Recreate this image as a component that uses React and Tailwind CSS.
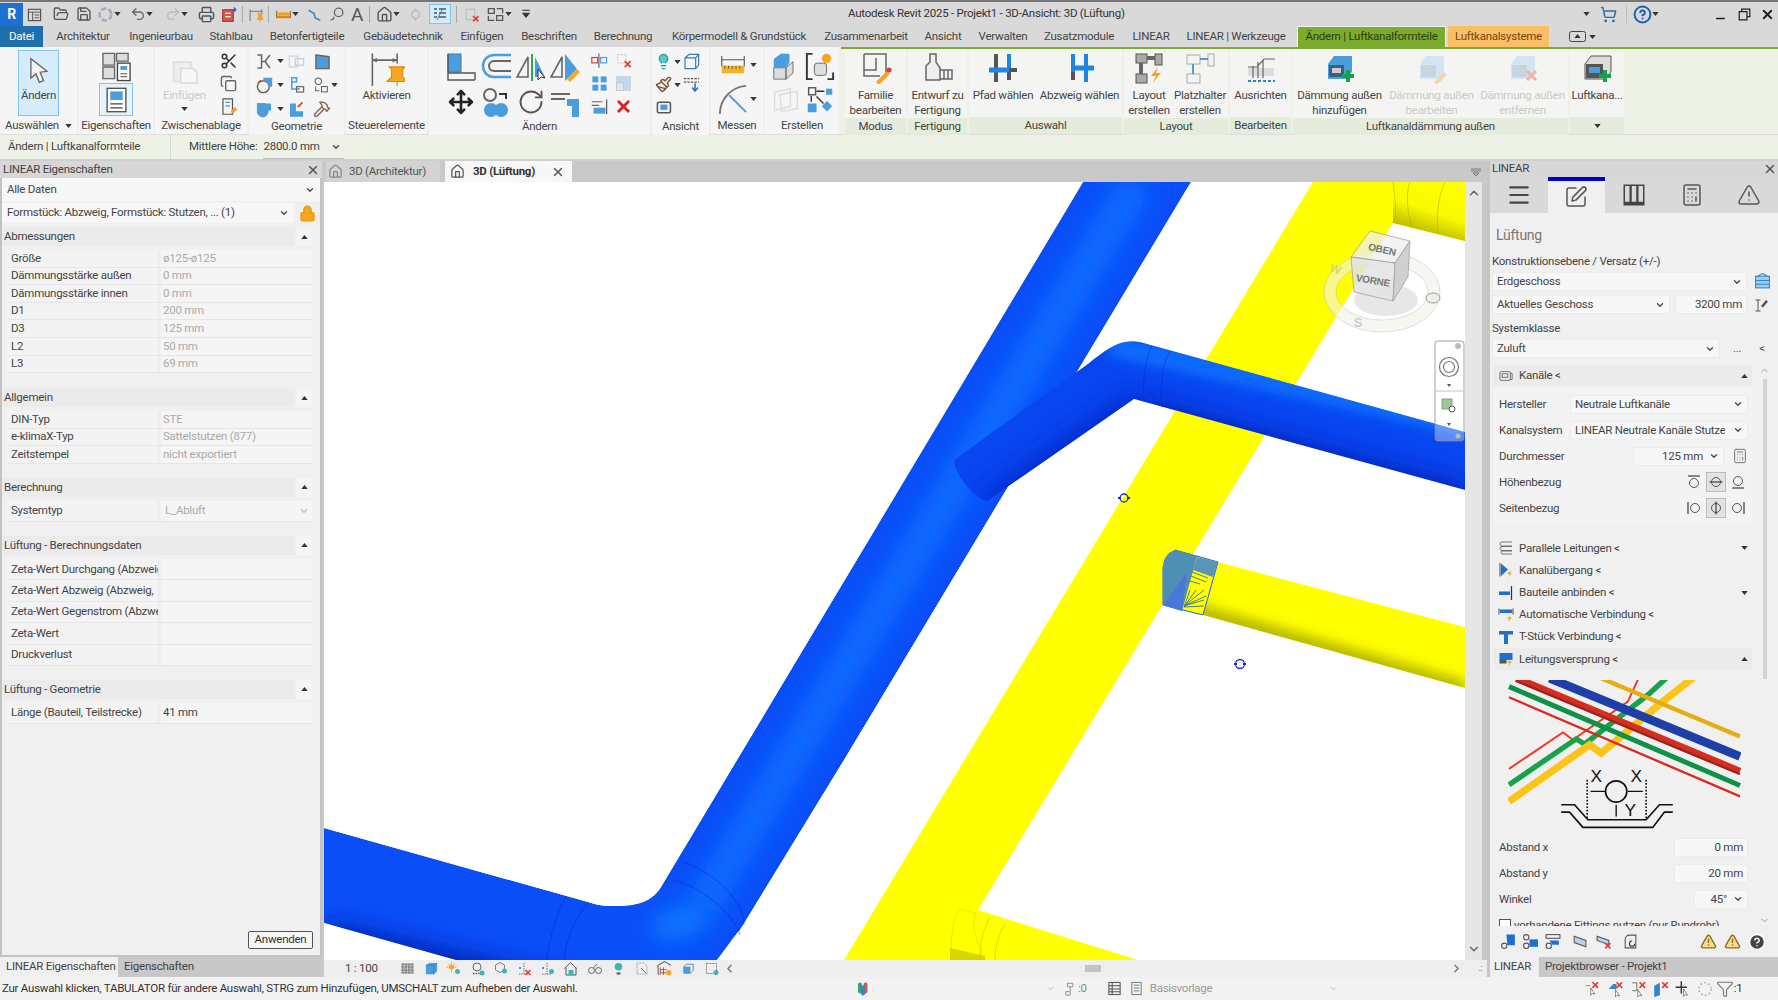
import {
  House, Lock, ShoppingCart, CircleHelp, X, Minus, Scissors, Copy, Move, RotateCw, FolderOpen, Save,
  Printer, Undo2, Redo2, ChevronDown, ChevronUp, ChevronLeft, ChevronRight, Lightbulb, Paintbrush,
  Hammer, Calculator, Menu, SquarePen, TriangleAlert, Filter,
} from 'lucide-react';

const Svg = ({ className = 'w-4 h-4', box = '0 0 32 32', children }) => (
  <svg viewBox={box} className={`${className} shrink-0`} fill="none">{children}</svg>
);

const Caret = ({ up }) => (
  <svg viewBox="0 0 8 5" className="w-[7px] h-[4px] shrink-0">
    <path d={up ? 'M0 5L4 0L8 5Z' : 'M0 0L8 0L4 5Z'} fill="#333" />
  </svg>
);

const Chev = ({ muted }) => <ChevronDown size={10} strokeWidth={3} className={muted ? 'text-[#bbb] shrink-0' : 'text-[#444] shrink-0'} />;

const Plus = () => <path d="M24 18v12M18 24h12" stroke="#16a34a" strokeWidth="4" />;
const Cross = ({ x = 24, y = 24 }) => <path d={`M${x - 5} ${y - 5}l10 10M${x + 5} ${y - 5}l-10 10`} stroke="#e23b2e" strokeWidth="3" />;
const Bolt = () => <path d="M25 15l-7 9h5l-3 7 8-10h-5z" fill="#f5a623" />;
const Pin = () => <path d="M18 14h10l-2 2v6l3 3h-12l3-3v-6zM23 25v6" fill="#f5a623" stroke="#d98a10" strokeWidth="1" />;

function QuickBar() {
  const g = '#555';
  return (
    <div className="flex items-center w-[848px] h-full">
      <div className="w-[23px] h-[23px] bg-[#1d6fd1] text-white font-bold text-[14px] flex items-center justify-center">R</div>
      <div className="flex items-center ml-[4px] gap-0">
        <Svg className="w-[15px] h-[15px]"><rect x="3" y="5" width="26" height="24" stroke={g} strokeWidth="2.5" /><path d="M3 11h26M12 11v18M16 17h10M16 23h10" stroke={g} strokeWidth="2" /></Svg>
        <FolderOpen size={16} color={g} className="ml-[11px]" />
        <Save size={16} color={g} className="ml-[7px]" />
        <Svg className="w-[17px] h-[17px] ml-[5px]"><circle cx="16" cy="16" r="11" stroke="#aab" strokeWidth="5" strokeDasharray="10 4" /></Svg>
        <Caret />
        <Undo2 size={16} color="#666" className="ml-[9px]" />
        <Caret />
        <Redo2 size={16} color="#bbb" className="ml-[12px]" />
        <Caret />
        <Printer size={17} color={g} className="ml-[10px]" />
        <Svg className="w-[17px] h-[17px] ml-[5px]"><rect x="5" y="7" width="20" height="22" fill="#d9574a" stroke="#a33" strokeWidth="2" /><path d="M10 14h10M10 20h10" stroke="#fff" strokeWidth="2.5" /><path d="M20 7h10M26 3l4 4l-4 4" stroke="#1d6fd1" strokeWidth="2.5" /></Svg>
        <div className="w-px h-[17px] bg-[#aaa] ml-[5px]" />
        <Svg className="w-[17px] h-[17px] ml-[5px]"><path d="M4 6v22M4 10h22M26 6v8" stroke="#666" strokeWidth="1.6" /><Pin /></Svg>
        <div className="w-px h-[17px] bg-[#aaa] ml-[3px]" />
        <Svg className="w-[17px] h-[17px] ml-[6px]"><path d="M3 9v14M29 9v14" stroke="#666" strokeWidth="2" /><rect x="3" y="12" width="26" height="5" fill="#e8a820" /><rect x="3" y="18" width="26" height="5" fill="#d98a10" /></Svg>
        <Caret />
        <Svg className="w-[17px] h-[17px] ml-[7px]"><path d="M5 8l10 6l2 8l10 5" stroke="#2d86c9" strokeWidth="3" /></Svg>
        <Svg className="w-[17px] h-[17px] ml-[5px]"><circle cx="20" cy="12" r="8" stroke="#666" strokeWidth="2.5" /><path d="M5 26a6 6 0 0 0 6-6" stroke="#666" strokeWidth="2.5" /></Svg>
        <span className="ml-[6px] text-[19px] leading-none text-[#555]">A</span>
        <div className="w-px h-[17px] bg-[#aaa] ml-[6px]" />
        <House size={17} color={g} className="ml-[6px]" />
        <Caret />
        <Svg className="w-[15px] h-[15px] ml-[8px]"><circle cx="16" cy="16" r="8" stroke="#bbb" strokeWidth="3" /><path d="M16 2v6M16 24v6" stroke="#bbb" strokeWidth="3" /></Svg>
        <div className="ml-[6px] w-[22px] h-[20px] bg-[#d3eaf7] border border-[#7fc6ee] flex items-center justify-center">
          <Svg className="w-[16px] h-[16px]"><path d="M4 6h6M4 14h6M4 22h6M14 6h14M14 14h14M14 22h14" stroke="#555" strokeWidth="3" /><path d="M10 28L22 4" stroke="#2d86c9" strokeWidth="2" /></Svg>
        </div>
        <div className="w-px h-[17px] bg-[#aaa] ml-[5px]" />
        <Svg className="w-[17px] h-[17px] ml-[6px]"><rect x="6" y="6" width="16" height="20" stroke="#bbb" strokeWidth="2" /><Cross /></Svg>
        <Svg className="w-[19px] h-[19px] ml-[6px]"><path d="M4 6h10v8H4zM18 18h10v8H18zM18 6h10M28 6v8M4 18v8h10" stroke="#555" strokeWidth="2.2" /></Svg>
        <Caret />
        <Svg className="w-[12px] h-[12px] ml-[8px]"><path d="M6 6h20M8 14h16l-8 10z" stroke="#333" fill="#333" strokeWidth="3" /></Svg>
      </div>
    </div>
  );
}

function TitleBar() {
  return (
    <div className="h-[26px] bg-[#d9d9d9] border-t-2 border-[#777] flex items-center">
      <QuickBar />
      <span className="text-[11.5px] text-[#333] whitespace-nowrap w-[285px]">Autodesk Revit 2025 - Projekt1 - 3D-Ansicht: 3D (Lüftung)</span>
      <div className="flex items-center ml-[450px]">
        <Caret />
        <ShoppingCart size={17} color="#2f6f9f" className="ml-[10px]" />
        <div className="w-px h-[17px] bg-[#bbb] ml-[9px]" />
        <CircleHelp size={19} color="#1f5fa8" strokeWidth={2.5} className="ml-[6px]" />
        <Caret />
        <Minus size={13} strokeWidth={3} color="#222" className="ml-[55px] mt-[8px]" />
        <Svg className="w-[13px] h-[13px] ml-[11px]"><path d="M9 9V3h20v18h-7M3 9h19v20H3z" stroke="#222" strokeWidth="3" /></Svg>
        <X size={15} strokeWidth={3} color="#222" className="ml-[9px]" />
      </div>
    </div>
  );
}

const tabs = [
  ['Architektur', 'w-[76px]'], ['Ingenieurbau', 'w-[80px]'], ['Stahlbau', 'w-[60px]'], ['Betonfertigteile', 'w-[92px]'],
  ['Gebäudetechnik', 'w-[100px]'], ['Einfügen', 'w-[58px]'], ['Beschriften', 'w-[76px]'], ['Berechnung', 'w-[72px]'],
  ['Körpermodell & Grundstück', 'w-[160px]'], ['Zusammenarbeit', 'w-[94px]'], ['Ansicht', 'w-[60px]'], ['Verwalten', 'w-[60px]'],
  ['Zusatzmodule', 'w-[92px]'], ['LINEAR', 'w-[52px]'], ['LINEAR | Werkzeuge', 'w-[118px]'],
];

function TabBar() {
  return (
    <div className="h-[21px] bg-[#d9d9d9] flex items-stretch text-[11.5px] text-[#444] whitespace-nowrap">
      <div className="w-[43px] bg-[#1f6fae] text-white flex items-center justify-center mr-[2px]">Datei</div>
      {tabs.map(([t, w]) => <div key={t} className={`${w} flex items-center justify-center`}>{t}</div>)}
      <div className="w-[149px] ml-[2px] bg-[#7cab2f] text-[#2c3d10] flex items-center justify-center border border-[#f0f0f0] border-b-0">Ändern | Luftkanalformteile</div>
      <div className="w-[101px] ml-[2px] bg-[#fbbe66] text-[#6b4a12] flex items-center justify-center">Luftkanalsysteme</div>
      <div className="ml-[20px] flex items-center gap-[3px]">
        <Svg className="w-[17px] h-[11px]" box="0 0 34 22"><rect x="1" y="1" width="32" height="20" rx="4" stroke="#444" strokeWidth="2" /><path d="M17 6l6 8H11z" fill="#333" /></Svg>
        <Caret />
      </div>
    </div>
  );
}

const Group = ({ w, label, ctx, children }) => (
  <div className={`${w} flex flex-col shrink-0 ${ctx ? 'bg-[#f4f5f2]' : 'bg-[#f5f5f5]'}`}>
    <div className={`${ctx ? 'h-[69px]' : 'h-[71px]'} flex justify-center`}>{children}</div>
    <div className={`h-[17px] flex items-center justify-center text-[11.5px] text-[#444] whitespace-nowrap ${ctx ? 'bg-[#e6ecdc]' : 'bg-[#f5f5f5]'}`}>{label}</div>
  </div>
);

const Big = ({ icon, text, w = 'w-[60px]', off }) => (
  <div className={`${w} flex flex-col items-center pt-[2px] shrink-0`}>
    <div className="h-[34px] flex items-center justify-center">{icon}</div>
    <div className={`mt-[3px] text-[11.5px] leading-[15px] text-center whitespace-pre ${off ? 'text-[#c9c9c9]' : 'text-[#444]'}`}>{text}</div>
  </div>
);

const I = ({ children, c = 'w-[20px] h-[20px]' }) => <Svg className={c}>{children}</Svg>;

function Ribbon() {
  const big = 'w-[32px] h-[32px]';
  const small = 'w-[19px] h-[19px]';
  return (
    <div className="h-[88px] flex gap-[2px] bg-[#eef2e6] border-b border-[#ddd]">
      <Group w="w-[77px]" label={<span className="flex items-center gap-[6px]">Auswählen <Caret /></span>}>
        <div className="w-[41px] h-[66px] mt-[3px] bg-[#d6ecfa] border border-[#7fc6ee] flex flex-col items-center pt-[3px]">
          <Svg className="w-[27px] h-[33px]"><path d="M7 2v23l6-5 4 10 5-2-4-10 8-1z" fill="#f5f5f5" stroke="#666" strokeWidth="1.6" /></Svg>
          <span className="text-[11.5px] leading-[15px] text-[#444] mt-[1px]">Ändern</span>
        </div>
      </Group>
      <Group w="w-[74px]" label="Eigenschaften">
        <div className="flex flex-col items-center pt-[4px]">
          <Svg className="w-[31px] h-[32px]"><path d="M2 2h12v12H2zM16 2h12v8H16zM2 16h12v12H2z" fill="#ddd" stroke="#666" strokeWidth="1.4" /><rect x="17" y="12" width="13" height="18" fill="#fff" stroke="#444" strokeWidth="1.4" /><rect x="20" y="15" width="7" height="4" fill="#4a9ede" /><path d="M20 23h7M20 26h7" stroke="#444" /></Svg>
          <div className="w-[34px] h-[33px] bg-[#e3f2fb] border border-[#7fc6ee] flex items-center justify-center">
            <Svg className="w-[25px] h-[30px]"><rect x="4" y="1" width="24" height="30" fill="#fff" stroke="#444" strokeWidth="1.6" /><rect x="8" y="5" width="16" height="11" fill="#4a9ede" /><path d="M8 21h16M8 26h16" stroke="#444" strokeWidth="1.5" /></Svg>
          </div>
        </div>
      </Group>
      <Group w="w-[92px]" label="Zwischenablage">
        <div className="flex gap-[14px] pt-[5px]">
          <div className="flex flex-col items-center">
            <Svg className="w-[28px] h-[36px]"><path d="M3 7h20v22H3z" fill="#eee" stroke="#ddd" strokeWidth="2" /><path d="M11 14h14l5 5v12H11z" fill="#f7f7f7" stroke="#ddd" strokeWidth="2" /></Svg>
            <span className="text-[11.5px] text-[#c9c9c9] leading-[15px]">Einfügen</span>
            <span className="mt-[4px]"><Caret /></span>
          </div>
          <div className="flex flex-col gap-[5px] pt-0">
            <Scissors size={18} color="#333" />
            <Copy size={17} color="#666" />
            <I c={small}><path d="M5 3h16v26H5z" stroke="#555" strokeWidth="2" /><path d="M9 9h8M9 15h8" stroke="#4a9ede" strokeWidth="2" /><path d="M18 24l7-7 4 4-7 7z" fill="#f5a623" /></I>
          </div>
        </div>
      </Group>
      <Group w="w-[95px]" label="Geometrie">
        <div className="grid grid-cols-[32px_26px_26px] auto-rows-[24px] pt-[2px] items-center">
          <span className="flex items-center gap-[3px]"><I c={small}><path d="M4 5h7v22H4M25 5l-8 11l8 11M11 16h6" stroke="#666" strokeWidth="2.5" /></I><Caret /></span>
          <I c={small}><path d="M4 7h14v18H4z" stroke="#bfd7ea" strokeWidth="2" /><path d="M14 11h14v11H14z" stroke="#ccc" strokeWidth="2" /></I>
          <I c={small}><path d="M5 5l22 3v20H5z" fill="#4a9ede" stroke="#666" strokeWidth="2.5" /></I>
          <span className="flex items-center gap-[3px]"><I c={small}><circle cx="14" cy="18" r="10" stroke="#666" strokeWidth="2.5" /><path d="M14 8a10 10 0 0 1 10 10h5V3H14z" fill="#4a9ede" /><path d="M5 12l5-5" stroke="#e23b2e" strokeWidth="2.5" /></I><Caret /></span>
          <I c={small}><path d="M8 3h8v7H8zM8 10v12h14" stroke="#4a9ede" strokeWidth="2.5" /><rect x="16" y="18" width="12" height="9" stroke="#666" strokeWidth="2" /></I>
          <span className="flex items-center gap-[1px]"><I c="w-[17px] h-[17px]"><circle cx="10" cy="8" r="6" stroke="#666" strokeWidth="2" /><rect x="16" y="18" width="11" height="10" stroke="#666" strokeWidth="2" /><path d="M5 18v8h7" stroke="#666" strokeWidth="2" /></I><Caret /></span>
          <span className="flex items-center gap-[3px]"><I c={small}><path d="M4 6h14v6a9 9 0 1 1-14 8z" fill="#4a9ede" stroke="#3b7db3" strokeWidth="1" /><path d="M18 6h9v12h-9" fill="#4a9ede" /></I><Caret /></span>
          <I c={small}><path d="M5 6v22h22v-9H15V6z" fill="#4a9ede" /><path d="M18 12l8-8" stroke="#e23b2e" strokeWidth="3" /></I>
          <Hammer size={18} color="#8a6a5a" />
        </div>
      </Group>
      <Group w="w-[81px]" label="Steuerelemente">
        <Big w="w-[80px] mt-[2px]" text="Aktivieren" icon={<Svg className="w-[36px] h-[36px]"><path d="M3 3v30M3 9h22M25 3v9" stroke="#666" strokeWidth="1.4" /><path d="M3 9l4-2v4zM25 9l-4-2v4z" fill="#666" /><path d="M18 15h14l-2 2v7l4 4H16l4-4v-7zM25 28v4" fill="#f5a623" stroke="#d98a10" /></Svg>} />
      </Group>
      <Group w="w-[221px]" label="Ändern">
        <div className="flex pt-[2px] gap-[4px]">
          <div className="grid grid-cols-[33px_37px_33px_36px] auto-rows-[35px] items-center justify-items-center">
            <I c={big}><rect x="3" y="3" width="13" height="18" fill="#4a9ede" stroke="#3b7db3" /><path d="M3 3v26h27M3 22h27v7" stroke="#555" strokeWidth="1.4" /></I>
            <I c={big}><path d="M31 4H14a10 10 0 0 0 0 22h17" stroke="#4a9ede" strokeWidth="2.5" /><path d="M31 10H14a4.500 4.500 0 0 0 0 10h17" stroke="#666" strokeWidth="2" /></I>
            <I c={big}><path d="M13 6L2 26h11z" stroke="#666" strokeWidth="1.6" /><path d="M17 3v27" stroke="#2fa84f" strokeWidth="2" /><path d="M20 6l10 20H20z" fill="#4a9ede" /><path d="M23 18v11l3-3 4 1z" fill="#fff" stroke="#333" /></I>
            <I c={big}><path d="M13 6L2 26h11z" stroke="#666" strokeWidth="1.6" /><path d="M16 3v27l12-12z" fill="#4a9ede" /><path d="M18 28l10-10 3 3-10 10z" fill="#f5a623" /></I>
            <Move size={26} color="#222" strokeWidth={2.4} />
            <I c={big}><circle cx="10" cy="9" r="6" stroke="#666" strokeWidth="2" /><circle cx="11" cy="24" r="7" fill="#4a9ede" /><circle cx="21" cy="24" r="7" fill="#4a9ede" /><path d="M19 8h7v5" stroke="#333" strokeWidth="2" /></I>
            <RotateCw size={28} color="#555" strokeWidth={1.6} />
            <I c={big}><path d="M2 8h19M2 13h14" stroke="#666" strokeWidth="2" /><path d="M18 13h12v18h-7V20h-5z" fill="#4a9ede" /></I>
          </div>
          <div className="grid grid-cols-[24px_24px] auto-rows-[23px] items-center justify-items-center">
            <I c={small}><path d="M15 4v24" stroke="#666" strokeWidth="2" /><rect x="3" y="11" width="10" height="9" stroke="#e23b2e" strokeWidth="2" /><rect x="18" y="11" width="10" height="9" stroke="#4a9ede" strokeWidth="2" /></I>
            <I c={small}><path d="M6 6h14v14H6z" stroke="#ccc" strokeWidth="2" strokeDasharray="3 2" /><Cross x={23} y={22} /></I>
            <I c={small}><rect x="4" y="4" width="10" height="10" fill="#4a9ede" /><rect x="18" y="4" width="10" height="10" fill="#4a9ede" /><rect x="4" y="18" width="10" height="10" fill="#4a9ede" /><rect x="18" y="18" width="10" height="10" fill="#4a9ede" /></I>
            <I c={small}><rect x="4" y="4" width="24" height="24" fill="#bcdaf0" stroke="#ccc" /><rect x="4" y="15" width="12" height="13" fill="#e6e6e6" stroke="#bbb" /></I>
            <I c={small}><path d="M3 8h18M3 14h12" stroke="#666" strokeWidth="2" /><rect x="6" y="18" width="20" height="10" fill="#4a9ede" /><path d="M28 4v25" stroke="#555" strokeWidth="2" /></I>
            <X size={19} color="#e02020" strokeWidth={3.5} />
          </div>
        </div>
      </Group>
      <Group w="w-[57px]" label="Ansicht">
        <div className="grid grid-cols-[27px_24px] auto-rows-[23px] pt-[3px] items-center">
          <span className="flex items-center gap-[2px]"><Lightbulb size={17} color="#2ea6a6" fill="#5cc8c8" /><Caret /></span>
          <I c={small}><path d="M5 10h18v18H5zM5 10l7-6h16v18l-5 6M23 10l5-6" stroke="#3b7db3" strokeWidth="2" /></I>
          <span className="flex items-center gap-[2px]"><Paintbrush size={17} color="#7a5230" /><Caret /></span>
          <I c={small}><path d="M3 6h26M3 12h26" stroke="#555" strokeWidth="2" strokeDasharray="4 2" /><path d="M22 14v12M17 21l5 6 5-6" stroke="#1d6fd1" strokeWidth="2.5" /></I>
          <I c={small}><rect x="4" y="7" width="22" height="18" rx="3" stroke="#555" strokeWidth="2.5" /><rect x="9" y="11" width="12" height="9" fill="#4a9ede" /></I>
        </div>
      </Group>
      <Group w="w-[52px]" label="Messen">
        <div className="flex flex-col pt-[6px] gap-[6px] items-center">
          <span className="flex items-center gap-[2px]"><I c="w-[30px] h-[24px]"><path d="M1 4v14M31 4v14M1 9h30" stroke="#555" strokeWidth="1.5" /><rect x="1" y="17" width="30" height="10" fill="#f0b429" /><path d="M5 17v4M10 17v4M15 17v4M20 17v4M25 17v4" stroke="#444" /></I><Caret /></span>
          <span className="flex items-center gap-[2px]"><I c="w-[30px] h-[32px]"><path d="M2 32A30 30 0 0 1 30 2" stroke="#777" strokeWidth="2" /><path d="M12 12L30 30" stroke="#4a9ede" strokeWidth="2" /></I><Caret /></span>
        </div>
      </Group>
      <Group w="w-[74px]" label="Erstellen">
        <div className="grid grid-cols-[36px_32px] auto-rows-[34px] pt-[2px] items-center justify-items-center">
          <I c="w-[28px] h-[30px]"><path d="M2 18h14v13H2zM16 18l8-7v13l-8 7z" fill="#ddd" stroke="#666" /><path d="M2 8l8-6h10v10l-4 6H2z" fill="#4a9ede" /></I>
          <I c="w-[30px] h-[30px]"><path d="M8 3H2v27h6M24 30h6v-7" stroke="#333" strokeWidth="2" /><rect x="10" y="13" width="13" height="13" rx="3" fill="#ddd" stroke="#666" /><circle cx="23" cy="8" r="5" fill="#f5a623" /></I>
          <I c="w-[30px] h-[28px]"><path d="M3 7l18-4v20L3 28zM9 10l20-4v20l-18 3z" fill="#f2f4f6" stroke="#ddd" strokeWidth="1.6" /></I>
          <I c="w-[28px] h-[28px]"><rect x="3" y="2" width="8" height="8" stroke="#555" strokeWidth="1.6" /><path d="M12 6h9M6 11v7M12 12l8 8" stroke="#333" strokeWidth="1.6" /><rect x="23" y="3" width="7" height="7" fill="#4a9ede" /><rect x="2" y="20" width="10" height="10" fill="#4a9ede" /><path d="M24 17l6 6-6 6-6-6z" fill="#4a9ede" /></I>
        </div>
      </Group>
      <div className="flex-1 flex gap-[2px] border-t-2 border-[#7cab2f] ml-0 pl-[4px]">
        <Group ctx w="w-[61px]" label="Modus">
          <Big text={'Familie\nbearbeiten'} icon={<I c={big}><path d="M4 2h22v22M4 2v22h16" stroke="#666" strokeWidth="1.5" /><path d="M4 18h12V6" stroke="#666" strokeWidth="1.5" /><path d="M16 30l11-11 3 3-11 11z" fill="#f5a623" /><circle cx="29" cy="18" r="2.500" fill="#e23b2e" /></I>} />
        </Group>
        <Group ctx w="w-[59px]" label="Fertigung">
          <Big text={'Entwurf zu\nFertigung'} icon={<I c={big}><path d="M8 2h6v8l4 6v12H4V14l4-4z" stroke="#666" strokeWidth="1.5" fill="#eee" /><path d="M18 18h12v9H18M22 18v9M26 18v9" stroke="#666" strokeWidth="1.5" /></I>} />
        </Group>
        <Group ctx w="w-[153px]" label="Auswahl">
          <div className="flex">
            <Big w="w-[68px]" text="Pfad wählen" icon={<I c={big}><path d="M9 2v28" stroke="#555" strokeWidth="4" /><path d="M22 2v15" stroke="#1d86e0" strokeWidth="4" /><path d="M22 17v11" stroke="#555" strokeWidth="4" /><path d="M2 18h20" stroke="#1d86e0" strokeWidth="5" /><path d="M22 18h8" stroke="#555" strokeWidth="4" /></I>} />
            <Big w="w-[85px]" text="Abzweig wählen" icon={<I c={big}><path d="M9 2v18" stroke="#1d86e0" strokeWidth="4" /><path d="M9 20v8" stroke="#555" strokeWidth="4" /><path d="M22 2v28" stroke="#1d86e0" strokeWidth="4" /><path d="M7 16h23" stroke="#1d86e0" strokeWidth="5" /></I>} />
          </div>
        </Group>
        <Group ctx w="w-[104px]" label="Layout">
          <div className="flex">
            <Big w="w-[48px]" text={'Layout\nerstellen'} icon={<I c={big}><rect x="3" y="2" width="11" height="9" fill="#aaa" stroke="#555" /><rect x="22" y="2" width="7" height="11" fill="#aaa" stroke="#555" /><rect x="3" y="22" width="11" height="9" fill="#aaa" stroke="#555" /><path d="M14 6h8M8 11v11" stroke="#666" strokeWidth="4" /><Bolt /></I>} />
            <Big w="w-[54px]" text={'Platzhalter\nerstellen'} icon={<I c={big}><rect x="3" y="3" width="13" height="9" stroke="#aaa" /><rect x="24" y="2" width="6" height="12" stroke="#aaa" /><rect x="3" y="22" width="13" height="9" stroke="#aaa" /><path d="M16 7h8M9 12v10" stroke="#4a9ede" strokeWidth="2" /></I>} />
          </div>
        </Group>
        <Group ctx w="w-[61px]" label="Bearbeiten">
          <Big text="Ausrichten" icon={<I c={big}><rect x="3" y="16" width="26" height="8" fill="#ddd" /><path d="M3 15h9l7-8h11M8 26v-12M13 26V10M18 26V8" stroke="#666" strokeWidth="1.2" /><path d="M3 29h27" stroke="#2d86c9" strokeWidth="2" strokeDasharray="3 2" /></I>} />
        </Group>
        <Group ctx w="w-[275px]" label="Luftkanaldämmung außen">
          <div className="flex">
            <Big w="w-[92px]" text={'Dämmung außen\nhinzufügen'} icon={<I c={big}><path d="M4 12l6-8h18v16l-6 7H4z" fill="#4a9ede" /><rect x="5" y="13" width="15" height="12" fill="#3b5f7c" /><rect x="8" y="16" width="9" height="5" fill="#ccc" /><Plus /></I>} />
            <Big off w="w-[92px]" text={'Dämmung außen\nbearbeiten'} icon={<I c={big}><path d="M4 12l6-8h18v16l-6 7H4z" fill="#d3e5f2" /><rect x="5" y="13" width="15" height="12" fill="#c9d5de" /><path d="M18 30l10-10 3 3-10 10z" fill="#f3d6a3" /></I>} />
            <Big off w="w-[90px]" text={'Dämmung außen\nentfernen'} icon={<I c={big}><path d="M4 12l6-8h18v16l-6 7H4z" fill="#d3e5f2" /><rect x="5" y="13" width="15" height="12" fill="#c9d5de" /><path d="M20 19l9 9M29 19l-9 9" stroke="#f1b0a8" strokeWidth="3" /></I>} />
          </div>
        </Group>
        <Group ctx w="w-[54px]" label={<Caret />}>
          <Big w="w-[54px]" text="Luftkana..." icon={<I c={big}><path d="M4 12l6-8h20v16l-6 7H4z" fill="#ddd" stroke="#555" /><rect x="5" y="12" width="17" height="14" fill="#555" /><rect x="8" y="15" width="11" height="6" fill="#4a9ede" /><Plus /></I>} />
        </Group>
      </div>
    </div>
  );
}

function OptionsBar() {
  return (
    <div className="h-[26px] bg-[#eef2e6] border-b-2 border-[#cfcfcf] flex items-center text-[11.5px] text-[#444] whitespace-nowrap">
      <span className="ml-[8px] w-[162px]">Ändern | Luftkanalformteile</span>
      <div className="w-px h-full bg-[#d5d8ce]" />
      <span className="ml-[18px]">Mittlere Höhe:</span>
      <span className="ml-[6px] h-full flex items-center border-b border-[#bbb] w-[81px] justify-between pr-[3px]">2800.0 mm <Chev /></span>
    </div>
  );
}

const Row = ({ label, value, h = 'h-[17.6px]', on }) => (
  <div className={`${h} flex items-center border-b border-[#e6e6e6] text-[11.5px] whitespace-nowrap`}>
    <div className="w-[151px] pl-[3px] overflow-hidden text-[#444] border-r border-[#e6e6e6] h-full flex items-center bg-[#f3f3f3]">{label}</div>
    <div className={`flex-1 ml-[2px] h-full pl-[2px] flex items-center bg-[#f5f5f5] ${on ? 'text-[#444]' : 'text-[#aaa]'}`}>{value}</div>
  </div>
);

const Section = ({ title, mt, children }) => (
  <div className={mt}>
    <div className="h-[19px] flex items-stretch text-[11.5px] text-[#444] pr-[8px]">
      <div className="flex-1 bg-[#ebebeb] flex items-center pl-[2px]">{title}</div>
      <div className="w-[16px] bg-[#f4f4f4] flex items-center justify-center ml-px"><Caret up /></div>
    </div>
    <div className="pl-[6px] pr-[8px] pt-[4px]">{children}</div>
  </div>
);

function LeftPanel() {
  return (
    <div className="w-[324px] shrink-0 flex flex-col pr-[2px]">
      <div className="h-[17px] bg-[#d7d7d7] flex items-center justify-between text-[11.5px] text-[#444] pl-[3px] pr-[2px]">LINEAR Eigenschaften <X size={14} color="#555" strokeWidth={2.5} /></div>
      <div className="flex-1 bg-[#f0f0f0] border-2 border-[#c2c2c2] border-t-0 flex flex-col min-h-0">
        <div className="h-[23px] bg-[#f7f7f7] flex items-center justify-between px-[5px] text-[11.5px] text-[#444]">Alle Daten <Chev /></div>
        <div className="flex items-center mt-[2px] pr-[4px]">
          <div className="h-[20px] flex-1 bg-[#f7f7f7] flex items-center justify-between px-[5px] text-[11.5px] text-[#444] whitespace-nowrap">Formstück: Abzweig, Formstück: Stutzen, ... (1) <Chev /></div>
          <Lock size={17} className="text-[#f39c12] ml-[5px]" fill="#f5a623" strokeWidth={2.5} />
        </div>
        <Section title="Abmessungen" mt="mt-[4px]">
          <Row label="Größe" value="ø125-ø125" />
          <Row label="Dämmungsstärke außen" value="0 mm" />
          <Row label="Dämmungsstärke innen" value="0 mm" />
          <Row label="D1" value="200 mm" />
          <Row label="D3" value="125 mm" />
          <Row label="L2" value="50 mm" />
          <Row label="L3" value="69 mm" />
        </Section>
        <Section title="Allgemein" mt="mt-[15px]">
          <Row label="DIN-Typ" value="STE" />
          <Row label="e-klimaX-Typ" value="Sattelstutzen (877)" />
          <Row label="Zeitstempel" value="nicht exportiert" />
        </Section>
        <Section title="Berechnung" mt="mt-[14px]">
          <Row h="h-[21px]" label="Systemtyp" value={<span className="flex items-center justify-between w-full pr-[3px] pl-[2px]">L_Abluft <Chev muted /></span>} />
        </Section>
        <Section title="Lüftung - Berechnungsdaten" mt="mt-[14px]">
          <Row h="h-[21.4px]" label="Zeta-Wert Durchgang (Abzweig" value="" />
          <Row h="h-[21.4px]" label="Zeta-Wert Abzweig (Abzweig," value="" />
          <Row h="h-[21.4px]" label="Zeta-Wert Gegenstrom (Abzweig" value="" />
          <Row h="h-[21.4px]" label="Zeta-Wert" value="" />
          <Row h="h-[21.4px]" label="Druckverlust" value="" />
        </Section>
        <Section title="Lüftung - Geometrie" mt="mt-[14px]">
          <Row h="h-[21px]" on label="Länge (Bauteil, Teilstrecke)" value="41 mm" />
        </Section>
        <div className="mt-auto mb-[6px] flex justify-end pr-[7px]">
          <div className="w-[65px] h-[18px] border border-[#555] rounded-[2px] bg-[#f5f5f5] flex items-center justify-center text-[11.5px] text-[#333]">Anwenden</div>
        </div>
      </div>
      <div className="h-[20px] flex text-[11.5px] text-[#444] whitespace-nowrap">
        <div className="w-[118px] bg-[#f0f0f0] flex items-center pl-[6px]">LINEAR Eigenschaften</div>
        <div className="flex-1 bg-[#c8c8c8] flex items-center pl-[6px]">Eigenschaften</div>
      </div>
    </div>
  );
}

function Viewport() {
  const main = 'M1083 182L737 760L661 887C650 905 630 906 613 906C600 906 595 904 588 902L324 828L324 923L456 960L717 960C725 950 735 935 740 930L844 760L1191 182Z';
  const arm = 'M1465 432L1140 342C1120 338 1105 350 1089 363L955 459C950 470 975 500 987 501L1134 399L1465 490Z';
  return (
    <svg viewBox="324 182 1141 778" className="w-[1141px] h-[778px] bg-white block shrink-0">
      <defs>
        <clipPath id="mainClip"><path d={main} /></clipPath>
        <clipPath id="armClip"><path d={arm} /></clipPath>
        <clipPath id="yBranchClip"><path d="M1218 562L1465 627L1465 688L1203 615Z" /></clipPath>
        <filter id="soft" filterUnits="userSpaceOnUse" x="324" y="182" width="1141" height="778"><feGaussianBlur stdDeviation="12" /></filter>
        <filter id="softer" filterUnits="userSpaceOnUse" x="324" y="182" width="1141" height="778"><feGaussianBlur stdDeviation="6" /></filter>
        <linearGradient id="ytop" gradientUnits="userSpaceOnUse" x1="1440" y1="190" x2="1425" y2="235">
          <stop offset="0" stopColor="#ffff00" />
          <stop offset="0.5" stopColor="#f8f800" />
          <stop offset="1" stopColor="#b8b800" />
        </linearGradient>
      </defs>

      {/* yellow run */}
      <path d="M1313 182L1465 182L1465 241L1393 223L978 910L1138 960L844 960Z" fill="#ffff00" />
      <path d="M1393 223L1393 182L1465 182L1465 241Z" fill="url(#ytop)" />
      <path d="M1393 182C1395 200 1398 215 1393 223M1410 182C1405 195 1408 215 1412 228M1445 182C1438 195 1436 220 1438 234" stroke="#a8a800" strokeWidth="0.5" fill="none" />
      <path d="M959 909C950 925 952 945 950 960L985 960C978 945 970 925 976 913Z" fill="#ffff00" stroke="#d0d000" strokeWidth="0.5" />
      <path d="M950 948L985 956L985 960L950 960Z" fill="#c8c800" opacity="0.7" />
      <path d="M990 918C982 930 980 945 980 960M1005 924C998 935 995 948 995 960" stroke="#b8b800" strokeWidth="0.5" fill="none" />

      {/* yellow branch and fitting */}
      <g clipPath="url(#yBranchClip)">
        <path d="M1218 562L1465 627L1465 688L1203 615Z" fill="#ffff00" />
        <path d="M1195 612L1465 690" stroke="#b8b800" strokeWidth="18" filter="url(#softer)" />
      </g>
      <path d="M1175 550L1218 562L1203 615L1163 605L1163 567Z" fill="#ffff00" stroke="#1f5fe0" strokeWidth="1" />
      <path d="M1175 550L1197 556L1182 611L1163 605L1163 567C1163 558 1168 552 1175 550Z" fill="#4f8fb5" />
      <path d="M1163 605L1187 572L1182 611Z" fill="#4a78d8" />
      <path d="M1197 557L1218 562L1213 577L1193 570Z" fill="#5a94b8" />
      <path d="M1192 572L1208 578M1191 576L1206 582M1190 581L1200 584M1184 606L1204 590M1184 606L1206 596M1184 606L1204 600M1184 607L1204 606M1184 607L1196 590M1184 607L1190 590" stroke="#3a6f98" strokeWidth="0.9" fill="none" />

      {/* blue runs */}
      <g clipPath="url(#mainClip)">
        <path d={main} fill="#0a4ef8" />
        <path d="M1137 182L790 760L700 910" stroke="#0a6cff" strokeWidth="34" filter="url(#soft)" />
        <path d="M324 945L560 1000" stroke="#001ea8" strokeWidth="44" filter="url(#soft)" />
        <path d="M655 930L705 915" stroke="#0a7cff" strokeWidth="28" filter="url(#soft)" />
      </g>
      <path d="M566 896C556 915 549 940 547 960M588 902C574 920 566 940 564 960" stroke="#0a2cb0" strokeWidth="0.5" fill="none" />
      <path d="M683 862C710 870 745 900 744 925M672 880C700 885 735 915 740 935" stroke="#0a2cb0" strokeWidth="0.5" fill="none" />

      <g clipPath="url(#armClip)">
        <path d={arm} fill="#0846f0" />
        <path d="M1110 345L1465 425" stroke="#0a6cff" strokeWidth="22" filter="url(#softer)" />
        <path d="M1140 418L1465 505" stroke="#001ab0" strokeWidth="34" filter="url(#soft)" />
        <path d="M990 510L1140 405" stroke="#0028c8" strokeWidth="30" filter="url(#soft)" />
      </g>
      <path d="M1152 346C1145 360 1142 385 1144 402M1170 351C1162 365 1160 385 1162 407" stroke="#0a2cb0" strokeWidth="0.5" fill="none" />

      {/* grip markers */}
      <g stroke="#1530d0" strokeWidth="1.300" fill="none">
        <circle cx="1124" cy="498" r="4" />
        <circle cx="1240" cy="664" r="4.500" />
        <path d="M1118 498h3M1127 498h3M1234 664h3M1243 664h3" strokeWidth="2" />
      </g>

      {/* view cube */}
      <ellipse cx="1382" cy="292" rx="52" ry="34" fill="none" stroke="#f2f2ea" strokeWidth="12" opacity="0.6" />
      <ellipse cx="1382" cy="292" rx="58" ry="40" fill="none" stroke="#999" strokeWidth="0.6" opacity="0.5" />
      <ellipse cx="1382" cy="292" rx="46" ry="28" fill="none" stroke="#999" strokeWidth="0.6" opacity="0.5" />
      <ellipse cx="1386" cy="300" rx="32" ry="16" fill="#bbb" opacity="0.35" />
      <path d="M1370 231L1410 241L1395 263L1351 257Z" fill="#efefef" fillOpacity="0.75" stroke="#999" strokeWidth="0.7" />
      <path d="M1351 257L1395 263L1393 301L1354 292Z" fill="#e3e3e3" fillOpacity="0.85" stroke="#999" strokeWidth="0.7" />
      <path d="M1410 241L1395 263L1393 301L1408 277Z" fill="#d0d0d0" stroke="#999" strokeWidth="0.7" />
      <text x="1382" y="253" textAnchor="middle" fontSize="10" fontWeight="700" fill="#777" transform="rotate(12 1382 250)" fontFamily="Liberation Sans, sans-serif">OBEN</text>
      <text x="1373" y="284" textAnchor="middle" fontSize="10" fontWeight="700" fill="#777" transform="rotate(10 1373 280)" fontFamily="Liberation Sans, sans-serif">VORNE</text>
      <text x="1335" y="273" textAnchor="middle" fontSize="12" fontWeight="700" fill="#d8d870" transform="rotate(20 1335 270)" fontFamily="Liberation Sans, sans-serif">W</text>
      <text x="1358" y="327" textAnchor="middle" fontSize="13" fontWeight="700" fill="#ccc" fontFamily="Liberation Sans, sans-serif">S</text>
      <ellipse cx="1433" cy="298" rx="7" ry="5" fill="#eee" stroke="#999" strokeWidth="1" />

      {/* navigation bar */}
      <rect x="1435" y="341" width="29" height="100" rx="3" fill="#fff" fillOpacity="0.35" stroke="#888" strokeWidth="0.8" />
      <circle cx="1458" cy="346" r="3" fill="#bbb" />
      <circle cx="1449" cy="367" r="9.500" fill="none" stroke="#777" strokeWidth="1.200" />
      <circle cx="1449" cy="367" r="5.500" fill="none" stroke="#777" strokeWidth="1.200" />
      <path d="M1447 384l4 0l-2 3zM1447 423l4 0l-2 3z" fill="#555" />
      <path d="M1436 391h27" stroke="#aaa" strokeWidth="0.7" />
      <rect x="1442" y="399" width="10" height="10" fill="#9cc79a" stroke="#6a9a68" strokeWidth="0.8" />
      <circle cx="1452" cy="409" r="3" fill="#fff" stroke="#555" />
      <circle cx="1458" cy="436" r="2.500" fill="#bbb" />
    </svg>
  );
}

const barIcons = [
  <Svg key="a" className="w-[15px] h-[15px]"><rect x="3" y="5" width="26" height="22" fill="#888" /><path d="M3 10h26M3 16h26M3 22h26M9 5v22M16 5v22M23 5v22" stroke="#ddd" strokeWidth="2" strokeDasharray="2 2" /></Svg>,
  <Svg key="b" className="w-[15px] h-[15px]"><path d="M4 9l7-5h17v18l-7 6H4z" fill="#4a9ede" /><path d="M4 9h17v19M21 9l7-5" stroke="#2f6f9f" strokeWidth="1.5" /></Svg>,
  <Svg key="c" className="w-[16px] h-[16px]"><circle cx="11" cy="12" r="5" fill="#f5a623" /><path d="M11 2v4M11 18v4M1 12h4M17 12h4M4 5l3 3M18 5l-3 3" stroke="#f5a623" strokeWidth="2" /><circle cx="23" cy="21" r="5" fill="#3fb4b4" /></Svg>,
  <Svg key="d" className="w-[16px] h-[16px]"><circle cx="14" cy="12" r="8" stroke="#666" strokeWidth="2" /><path d="M6 25h16" stroke="#666" strokeWidth="3" strokeDasharray="3 2" /><circle cx="24" cy="24" r="5" fill="#3fb4b4" /></Svg>,
  <Svg key="e" className="w-[16px] h-[16px]"><path d="M5 8l9-5 9 5v10l-9 5-9-5z" stroke="#666" strokeWidth="1.6" /><circle cx="23" cy="20" r="5" fill="#3fb4b4" /></Svg>,
  <Svg key="f" className="w-[16px] h-[16px]"><path d="M14 4v22M4 26h18" stroke="#555" strokeWidth="1.6" strokeDasharray="3 2" /><Cross x={22} y={23} /><path d="M4 14h4" stroke="#1d6fd1" strokeWidth="3" /></Svg>,
  <Svg key="g" className="w-[16px] h-[16px]"><path d="M14 4v22M4 26h18" stroke="#555" strokeWidth="1.6" strokeDasharray="3 2" /><circle cx="23" cy="21" r="5" fill="#3fb4b4" /><path d="M4 14h4" stroke="#1d6fd1" strokeWidth="3" /></Svg>,
  <Svg key="h" className="w-[16px] h-[16px]"><path d="M3 15L15 3l12 12M6 13v15h20V13" stroke="#555" strokeWidth="2" /><rect x="11" y="18" width="10" height="10" fill="#3fb4b4" /></Svg>,
  <Svg key="i" className="w-[16px] h-[16px]"><circle cx="9" cy="19" r="6" stroke="#666" strokeWidth="2" /><circle cx="23" cy="19" r="6" stroke="#666" strokeWidth="2" /><path d="M13 14L20 6" stroke="#666" strokeWidth="2" /></Svg>,
  <Svg key="j" className="w-[15px] h-[15px]"><circle cx="16" cy="12" r="8" fill="#3fb4b4" /><path d="M12 24h8v5h-8z" fill="#666" /></Svg>,
  <Svg key="k" className="w-[16px] h-[16px]"><path d="M6 4h14l6 6v16H6z" stroke="#888" strokeWidth="1.6" strokeDasharray="3 2" /><path d="M14 14l10 10" stroke="#666" strokeWidth="2" /></Svg>,
  <Svg key="l" className="w-[17px] h-[17px]"><path d="M4 28V10l12-7 12 7" stroke="#666" strokeWidth="2" /><path d="M8 14v14M14 14v14M20 18h-12M8 24h12" stroke="#c0392b" strokeWidth="1.6" /><circle cx="24" cy="24" r="5" fill="#f5a623" /></Svg>,
  <Svg key="m" className="w-[15px] h-[15px]"><path d="M6 12l6-5h14v13l-6 6H6z" stroke="#666" strokeWidth="1.6" /><rect x="6" y="12" width="14" height="14" fill="#4a9ede" /></Svg>,
  <Svg key="n" className="w-[16px] h-[16px]"><rect x="5" y="5" width="20" height="20" stroke="#666" strokeWidth="1.6" strokeDasharray="4 2" /><circle cx="24" cy="23" r="5" fill="#3fb4b4" /></Svg>,
];

function Center() {
  return (
    <div className="w-[1163px] shrink-0 flex flex-col">
      <div className="h-[21px] bg-[#c9c9c9] flex items-stretch text-[11.5px] whitespace-nowrap pl-[2px]">
        <div className="w-[114px] flex items-center pl-[2px] text-[#555] bg-[#d3d3d3]"><House size={15} color="#888" /> <span className="ml-[6px]">3D (Architektur)</span></div>
        <div className="w-[127px] ml-[5px] flex items-center pl-[5px] bg-[#f7f7f7] font-bold text-[#333]"><House size={15} color="#555" /> <span className="ml-[8px]">3D (Lüftung)</span> <X size={14} strokeWidth={2.5} color="#555" className="ml-[16px]" /></div>
        <div className="flex-1 flex items-center justify-end pr-[6px]">
          <Svg className="w-[10px] h-[10px]" box="0 0 10 10"><path d="M0 2h10M0 4h10M2 6h6l-3 3z" stroke="#777" /></Svg>
        </div>
      </div>
      <div className="flex">
        <Viewport />
        <div className="w-[17px] h-[778px] bg-[#e6e6e6] flex flex-col justify-between items-center py-[4px]">
          <ChevronUp size={14} strokeWidth={2.5} color="#666" />
          <ChevronDown size={14} strokeWidth={2.5} color="#666" />
        </div>
      </div>
      <div className="h-[17px] flex-1 bg-[#eeeeee] flex items-center">
        <span className="w-[72px] pl-[21px] text-[11.5px] text-[#444] whitespace-nowrap">1 : 100</span>
        <div className="flex items-center">
          {barIcons.map((ic) => <span key={ic.key} className="w-[23.4px] flex justify-center">{ic}</span>)}
        </div>
        <ChevronLeft size={13} color="#777" strokeWidth={2.5} />
        <div className="w-[16px] h-[7px] bg-[#c4c4c4] ml-[349px]" />
        <ChevronRight size={13} color="#777" strokeWidth={2.5} className="ml-[349px]" />
        <span className="ml-[15px] text-[9px] leading-none text-[#666]">.:</span>
      </div>
    </div>
  );
}

const Field = ({ w, children, right }) => (
  <div className={`${w} h-[19px] bg-[#f7f7f7] border border-[#ececec] flex items-center ${right ? 'justify-end' : 'justify-between'} px-[4px] text-[11.5px] text-[#444] whitespace-nowrap overflow-hidden shrink-0`}>{children}</div>
);

const Accord = ({ icon, title, caret }) => (
  <div className="h-[22.2px] shrink-0 flex items-center text-[11.5px] text-[#444] whitespace-nowrap">
    <span className="w-[20px] flex justify-center ml-[2px]">{icon}</span>
    <span className="ml-[3px] flex-1">{title}</span>
    {caret && <span className="w-[16px] flex justify-center"><Caret up={caret === 'up'} /></span>}
  </div>
);

const CfgRow = ({ label, children }) => (
  <div className="h-[26px] flex items-center justify-between pl-[5px] pr-[4px] text-[11.5px] text-[#444] whitespace-nowrap">
    <span className="w-[70px] overflow-hidden">{label}</span>
    {children}
  </div>
);

const Toggle = ({ children, on }) => (
  <span className={`w-[20px] h-[20px] flex items-center justify-center ${on ? 'bg-[#e2e2e2] border border-[#bdbdbd]' : ''}`}>{children}</span>
);

function OffsetPicture() {
  return (
    <svg viewBox="80 440 700 455" className="w-[233px] h-[152px] ml-[14px] mt-[8px] block shrink-0" fill="none">
      <defs>
        <clipPath id="pic"><rect x="80" y="445" width="700" height="450" /></clipPath>
      </defs>
      <g clipPath="url(#pic)">
        <path d="M83 712L245 603L275 625L440 510L470 445" stroke="#f03a24" strokeWidth="6" />
        <path d="M83 760L285 622L310 638L500 490L555 440" stroke="#17a34a" strokeWidth="16" />
        <path d="M83 810L325 640L360 665L545 510L640 435" stroke="#fcc419" strokeWidth="22" />
        <path d="M360 440L777 615" stroke="#e6ad12" strokeWidth="13" />
        <path d="M205 440L777 675" stroke="#1f3fa8" strokeWidth="26" />
        <path d="M105 440L777 720" stroke="#d92b20" strokeWidth="22" />
        <path d="M105 448L777 728" stroke="#8a2a22" strokeWidth="6" />
        <path d="M83 465L777 762" stroke="#0f9148" strokeWidth="15" />
        <path d="M83 497L777 795" stroke="#d92b20" strokeWidth="7" />
      </g>
      <g stroke="#111" strokeWidth="5">
        <path d="M240 820H280L320 865H495L535 820H575M240 842H265L305 888H515L550 842H575" />
        <circle cx="405" cy="780" r="32" />
        <path d="M318 745V860M495 745V860" strokeDasharray="5 5" />
        <path d="M328 780H372M440 780H485M405 820V855" strokeWidth="4" />
      </g>
      <text x="345" y="752" fontSize="52" fill="#111" textAnchor="middle" fontFamily="Liberation Sans, sans-serif">X</text>
      <text x="465" y="752" fontSize="52" fill="#111" textAnchor="middle" fontFamily="Liberation Sans, sans-serif">X</text>
      <text x="447" y="855" fontSize="52" fill="#111" textAnchor="middle" fontFamily="Liberation Sans, sans-serif">Y</text>
    </svg>
  );
}

function RightPanel() {
  const tabIcon = 'w-[58px] flex items-center justify-center';
  return (
    <div className="w-[291px] shrink-0 flex flex-col border-l-[3px] border-[#c6c6c6]">
      <div className="h-[16px] bg-[#d7d7d7] flex items-center justify-between text-[11.5px] text-[#444] pl-[2px] pr-[1px]">LINEAR <X size={14} color="#555" strokeWidth={2.5} /></div>
      <div className="h-[36px] flex items-stretch bg-[#d9d9d9]">
        <div className={tabIcon}><Menu size={26} color="#444" strokeWidth={2} /></div>
        <div className={`${tabIcon} bg-[#f0f0f0] border-t-[4px] border-[#0000c8]`}><SquarePen size={24} color="#555" strokeWidth={1.5} /></div>
        <div className={tabIcon}><Svg className="w-[24px] h-[24px]"><path d="M3 3h8v26H3zM12 3h8v26h-8zM21 3h8v26h-8z" stroke="#444" strokeWidth="2" /><path d="M3 25h26v4H3z" fill="#444" /></Svg></div>
        <div className={tabIcon}><Calculator size={24} color="#555" strokeWidth={1.5} /></div>
        <div className={tabIcon}><TriangleAlert size={24} color="#555" strokeWidth={1.5} /></div>
      </div>
      <div className="flex-1 bg-[#f0f0f0] flex flex-col min-h-0 overflow-hidden pl-[2px]">
        <div className="text-[14px] text-[#777] mt-[13px] ml-[4px] leading-[18px]">Lüftung</div>
        <div className="text-[11.5px] text-[#444] mt-[9px] leading-[16px] whitespace-nowrap">Konstruktionsebene / Versatz (+/-)</div>
        <div className="flex items-center mt-[3px]">
          <Field w="w-[255px]">Erdgeschoss <Chev /></Field>
          <Svg className="w-[17px] h-[17px] ml-[7px]"><rect x="3" y="6" width="26" height="22" fill="#9fcdf0" stroke="#2f86c9" strokeWidth="2" /><path d="M3 14h26M3 21h26M7 6l9-5 9 5" stroke="#2f86c9" strokeWidth="2" /></Svg>
        </div>
        <div className="flex items-center mt-[4px]">
          <Field w="w-[178px]">Aktuelles Geschoss <Chev /></Field>
          <Field right w="w-[72px] ml-[5px]">3200 mm</Field>
          <Svg className="w-[16px] h-[18px] ml-[7px]"><path d="M8 6v22M3 6h10M3 28h10" stroke="#555" strokeWidth="2" /><path d="M14 18l10-12 4 3-10 12z" fill="#555" /></Svg>
        </div>
        <div className="text-[11.5px] text-[#444] mt-[6px] leading-[16px]">Systemklasse</div>
        <div className="flex items-center mt-[3px] text-[#555] text-[11.5px]">
          <Field w="w-[228px]">Zuluft <Chev /></Field>
          <span className="ml-[13px] leading-none">...</span>
          <span className="ml-[18px] leading-none">&lt;</span>
        </div>
        <div className="flex mt-[7px] min-h-0 flex-1">
          <div className="w-[258px] shrink-0 ml-[2px] flex flex-col overflow-hidden bg-[#f0f0f0]">
            <div className="bg-[#ebebeb] shrink-0">
              <Accord caret="up" title="Kanäle <" icon={<Svg className="w-[16px] h-[14px]"><rect x="2" y="6" width="24" height="20" rx="3" stroke="#666" strokeWidth="2" /><path d="M26 10h4v14h-4" stroke="#666" strokeWidth="2" /><rect x="7" y="11" width="13" height="8" stroke="#666" strokeWidth="2" /></Svg>} />
            </div>
            <div className="bg-[#f3f3f3] pt-[4px] pb-[3px] shrink-0">
              <CfgRow label="Hersteller"><Field w="w-[178px]">Neutrale Luftkanäle <Chev /></Field></CfgRow>
              <CfgRow label="Kanalsystem"><Field w="w-[178px]"><span className="overflow-hidden w-[150px]">LINEAR Neutrale Kanäle Stutzen</span> <Chev /></Field></CfgRow>
              <CfgRow label="Durchmesser">
                <span className="flex items-center gap-[8px]">
                  <Field w="w-[91px]"><span className="ml-auto mr-[6px]">125 mm</span> <Chev /></Field>
                  <Calculator size={16} color="#777" strokeWidth={1.5} />
                </span>
              </CfgRow>
              <CfgRow label="Höhenbezug">
                <span className="flex gap-[2px]">
                  <Toggle><Svg className="w-[16px] h-[16px]"><path d="M4 4h24" stroke="#444" strokeWidth="2.5" /><circle cx="16" cy="18" r="9" stroke="#555" strokeWidth="2" /></Svg></Toggle>
                  <Toggle on><Svg className="w-[16px] h-[16px]"><circle cx="16" cy="16" r="9" stroke="#555" strokeWidth="2" /><path d="M3 16h26" stroke="#444" strokeWidth="2.5" /></Svg></Toggle>
                  <Toggle><Svg className="w-[16px] h-[16px]"><circle cx="16" cy="14" r="9" stroke="#555" strokeWidth="2" /><path d="M4 28h24" stroke="#444" strokeWidth="2.5" /></Svg></Toggle>
                </span>
              </CfgRow>
              <CfgRow label="Seitenbezug">
                <span className="flex gap-[2px]">
                  <Toggle><Svg className="w-[16px] h-[16px]"><path d="M4 4v24" stroke="#444" strokeWidth="2.5" /><circle cx="18" cy="16" r="9" stroke="#555" strokeWidth="2" /></Svg></Toggle>
                  <Toggle on><Svg className="w-[16px] h-[16px]"><circle cx="16" cy="16" r="9" stroke="#555" strokeWidth="2" /><path d="M16 3v26" stroke="#444" strokeWidth="2.5" /></Svg></Toggle>
                  <Toggle><Svg className="w-[16px] h-[16px]"><circle cx="14" cy="16" r="9" stroke="#555" strokeWidth="2" /><path d="M28 4v24" stroke="#444" strokeWidth="2.5" /></Svg></Toggle>
                </span>
              </CfgRow>
            </div>
            <div className="h-[13px] shrink-0" />
            <Accord caret="down" title="Parallele Leitungen <" icon={<Svg className="w-[16px] h-[16px]"><path d="M28 4H8a4 4 0 0 0 0 8h20M28 13H8a4 4 0 0 0 0 8h20M28 22H8a4 4 0 0 0 0 6h20" stroke="#666" strokeWidth="1.8" /></Svg>} />
            <Accord title="Kanalübergang <" icon={<Svg className="w-[16px] h-[16px]"><path d="M6 3l14 12L6 28z" fill="#1d6fd1" /><path d="M4 2v27" stroke="#444" strokeWidth="2" /><Bolt /></Svg>} />
            <Accord caret="down" title="Bauteile anbinden <" icon={<Svg className="w-[16px] h-[16px]"><path d="M2 13h22v7H2z" fill="#1d6fd1" /><path d="M27 2v28" stroke="#333" strokeWidth="2.5" /></Svg>} />
            <Accord title="Automatische Verbindung <" icon={<Svg className="w-[16px] h-[16px]"><path d="M4 5h24v7H4z" fill="#1d6fd1" /><path d="M2 3v12M30 3v12" stroke="#444" strokeWidth="2" /><Bolt /></Svg>} />
            <Accord title="T-Stück Verbindung <" icon={<Svg className="w-[16px] h-[16px]"><path d="M2 4h28v7H20v19h-8V11H2z" fill="#1d6fd1" /></Svg>} />
            <div className="bg-[#ebebeb] shrink-0">
              <Accord caret="up" title="Leitungsversprung <" icon={<Svg className="w-[16px] h-[16px]"><rect x="3" y="4" width="26" height="14" fill="#1d6fd1" /><rect x="3" y="18" width="14" height="7" fill="#555" /><Bolt /></Svg>} />
            </div>
            <OffsetPicture />
            <div className="mt-[4px] h-[26px] shrink-0 flex items-center justify-between pl-[5px] text-[11.5px] text-[#444] pr-[4px]">Abstand x <Field right w="w-[74px]">0 mm</Field></div>
            <div className="h-[26px] shrink-0 flex items-center justify-between pl-[5px] text-[11.5px] text-[#444] pr-[4px]">Abstand y <Field right w="w-[74px]">20 mm</Field></div>
            <div className="h-[26px] shrink-0 flex items-center justify-between pl-[5px] text-[11.5px] text-[#444] pr-[4px]">Winkel <Field w="w-[54px]"><span className="ml-auto mr-[6px]">45°</span> <Chev /></Field></div>
            <div className="flex items-center mt-[4px] ml-[5px] text-[11.5px] leading-[18px] text-[#444] whitespace-nowrap shrink-0">
              <span className="w-[12px] h-[12px] border border-[#555] bg-white mr-[3px] shrink-0" />
              vorhandene Fittings nutzen (nur Rundrohr)
            </div>
          </div>
          <div className="w-[13px] ml-[6px] flex flex-col items-center">
            <ChevronUp size={11} color="#999" />
            <div className="w-[4px] h-[300px] bg-[#d3d3d3] mt-[3px]" />
            <ChevronDown size={11} color="#999" className="mt-auto" />
          </div>
        </div>
        <div className="h-[31px] shrink-0 flex items-center pl-[8px] pr-[12px] bg-[#f0f0f0]">
          <Svg className="w-[17px] h-[17px]"><path d="M12 3h16v20H14z" fill="#1d6fd1" /><circle cx="8" cy="24" r="5" stroke="#555" strokeWidth="2" /></Svg>
          <Svg className="w-[17px] h-[17px] ml-[5px]"><rect x="14" y="12" width="16" height="14" fill="#1d6fd1" /><circle cx="8" cy="8" r="5" stroke="#555" strokeWidth="2" /><circle cx="8" cy="24" r="5" stroke="#555" strokeWidth="2" /></Svg>
          <Svg className="w-[17px] h-[17px] ml-[5px]"><rect x="4" y="3" width="26" height="7" stroke="#555" strokeWidth="2" /><path d="M10 14h18v8H16z" fill="#1d6fd1" /><circle cx="9" cy="24" r="5" stroke="#555" strokeWidth="2" /></Svg>
          <Svg className="w-[17px] h-[17px] ml-[10px]"><path d="M6 6l22 8v12L6 18z" fill="#b9d4e8" stroke="#555" strokeWidth="2" /></Svg>
          <Svg className="w-[17px] h-[17px] ml-[7px]"><path d="M4 6l22 8v8L4 14z" fill="#b9d4e8" stroke="#555" strokeWidth="2" /><Cross /></Svg>
          <Svg className="w-[17px] h-[17px] ml-[10px]"><path d="M6 28V12a8 8 0 0 1 8-8h12v24z" stroke="#555" strokeWidth="2" /><path d="M24 20a5 5 0 1 1-5-5" stroke="#333" strokeWidth="2" /></Svg>
          <TriangleAlert size={17} color="#8a6d1f" fill="#f6d98a" className="ml-auto" />
          <TriangleAlert size={17} color="#8a6d1f" fill="#f6d98a" className="ml-[7px]" />
          <CircleHelp size={18} color="#fff" fill="#444" className="ml-[7px]" />
        </div>
      </div>
      <div className="h-[20px] flex text-[11.5px] text-[#444] whitespace-nowrap">
        <div className="w-[49px] bg-[#f0f0f0] flex items-center pl-[4px]">LINEAR</div>
        <div className="flex-1 bg-[#c8c8c8] flex items-center pl-[6px]">Projektbrowser - Projekt1</div>
      </div>
    </div>
  );
}

function StatusBar() {
  return (
    <div className="h-[23px] bg-[#f2f2f2] flex items-center text-[11.5px] text-[#333] whitespace-nowrap">
      <span className="ml-[2px] w-[853px]">Zur Auswahl klicken, TABULATOR für andere Auswahl, STRG zum Hinzufügen, UMSCHALT zum Aufheben der Auswahl.</span>
      <Svg className="w-[16px] h-[17px]"><rect x="6" y="4" width="8" height="22" rx="4" fill="#3f9e6f" /><rect x="17" y="4" width="8" height="22" rx="4" fill="#d9574a" /><rect x="12" y="10" width="8" height="20" rx="4" fill="#2f86c9" /></Svg>
      <ChevronDown size={11} color="#bbb" className="ml-[174px]" />
      <Svg className="w-[14px] h-[16px] ml-[8px]"><path d="M8 3h12v8H8zM4 22h10v8H4zM14 11v11" stroke="#888" strokeWidth="2" /></Svg>
      <span className="text-[#888]">:0</span>
      <Svg className="w-[15px] h-[15px] ml-[20px]"><rect x="4" y="3" width="24" height="26" stroke="#444" strokeWidth="2" /><path d="M4 10h24M4 17h24M4 23h24M11 3v26" stroke="#444" strokeWidth="2" /></Svg>
      <Svg className="w-[15px] h-[15px] ml-[7px]"><rect x="6" y="3" width="20" height="26" stroke="#777" strokeWidth="2" /><path d="M10 9h12M10 15h12M10 21h12" stroke="#777" strokeWidth="2" /></Svg>
      <span className="ml-[6px] w-[178px] text-[#999]">Basisvorlage</span>
      <ChevronDown size={11} color="#bbb" />
      <div className="ml-[245px] flex items-center">
        <Svg className="w-[18px] h-[18px]"><path d="M3 10h8" stroke="#e07b39" strokeWidth="2" /><Cross x={20} y={9} /><path d="M12 14v13l3-3 4 1z" fill="#fff" stroke="#333" /></Svg>
        <Svg className="w-[18px] h-[18px] ml-[5px]"><path d="M3 16l8-9h6v9z" fill="#2f86c9" /><Cross x={22} y={9} /><path d="M15 17v13l3-3 4 1z" fill="#fff" stroke="#333" /></Svg>
        <Svg className="w-[18px] h-[18px] ml-[5px]"><path d="M4 5h8v14H4" stroke="#666" strokeWidth="1.6" /><Cross x={22} y={9} /><path d="M14 17v13l3-3 4 1z" fill="#fff" stroke="#333" /></Svg>
        <Svg className="w-[18px] h-[18px] ml-[4px]"><path d="M4 10l10-5v22L4 30z" fill="#2f86c9" /><Cross x={23} y={9} /></Svg>
        <Svg className="w-[18px] h-[18px] ml-[4px]"><path d="M13 2v22M3 13h20" stroke="#333" strokeWidth="2.5" /><path d="M17 16v13l3-3 4 1z" fill="#fff" stroke="#333" /></Svg>
        <Svg className="w-[18px] h-[18px] ml-[4px]"><circle cx="16" cy="16" r="11" stroke="#aaa" strokeWidth="2.5" strokeDasharray="3 4" /></Svg>
        <Filter size={18} color="#777" strokeWidth={1.5} className="ml-[2px]" />
        <span className="text-[#333] text-[11.5px]">:1</span>
      </div>
    </div>
  );
}

export default function App() {
  return (
    <div className="w-[1778px] h-[1000px] overflow-hidden bg-[#c8c8c8] font-['Roboto',sans-serif] tracking-[-0.25px] flex flex-col">
      <TitleBar />
      <TabBar />
      <Ribbon />
      <OptionsBar />
      <div className="h-[816px] flex overflow-hidden">
        <LeftPanel />
        <Center />
        <RightPanel />
      </div>
      <StatusBar />
    </div>
  );
}
